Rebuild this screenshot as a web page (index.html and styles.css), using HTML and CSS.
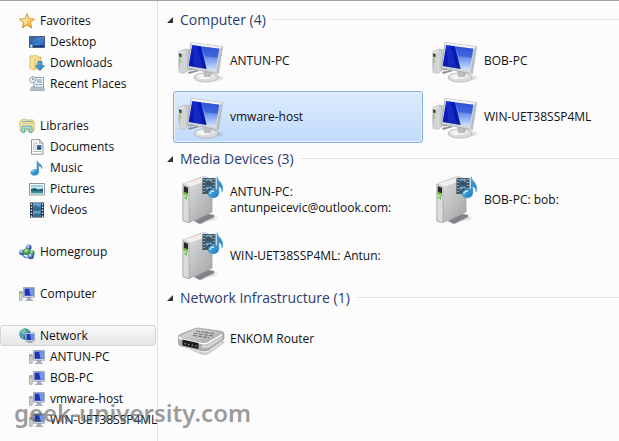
FILE: index.html
```html
<!DOCTYPE html>
<html lang="en">
<head>
<meta charset="utf-8">
<title>Network</title>
<link rel="stylesheet" href="styles.css">
</head>
<body>
<svg class="defs" width="0" height="0" aria-hidden="true">
  <defs>
    <linearGradient id="screen" x1="0" y1="0" x2="0" y2="1"><stop offset="0" stop-color="#3558d8"/><stop offset=".5" stop-color="#6c90ec"/><stop offset="1" stop-color="#d3e6fd"/></linearGradient>
    <linearGradient id="screenDark" x1="0" y1="0" x2="1" y2="1"><stop offset="0" stop-color="#0a1cc8"/><stop offset="1" stop-color="#0516a0"/></linearGradient>
    <linearGradient id="metal" x1="0" y1="0" x2="1" y2="1"><stop offset="0" stop-color="#e4e4e4"/><stop offset=".5" stop-color="#c2c3c4"/><stop offset="1" stop-color="#a2a3a5"/></linearGradient>
    <linearGradient id="silver" x1="0" y1="0" x2="1" y2="0"><stop offset="0" stop-color="#f8f8f8"/><stop offset="1" stop-color="#b4b6b9"/></linearGradient>
    <linearGradient id="gold" x1="0" y1="0" x2="0" y2="1"><stop offset="0" stop-color="#fff0a0"/><stop offset="1" stop-color="#f2ac28"/></linearGradient>
    <linearGradient id="folder" x1="0" y1="0" x2="1" y2="1"><stop offset="0" stop-color="#fcf3ba"/><stop offset="1" stop-color="#e3c065"/></linearGradient>
    <linearGradient id="note" x1="0" y1="0" x2="1" y2="1"><stop offset="0" stop-color="#67c5ef"/><stop offset="1" stop-color="#126fb6"/></linearGradient>
    <linearGradient id="desk" x1="0" y1="0" x2="1" y2="1"><stop offset="0" stop-color="#123a80"/><stop offset=".6" stop-color="#3c82d0"/><stop offset="1" stop-color="#1b4c98"/></linearGradient>
    <linearGradient id="photo" x1="0" y1="0" x2="0" y2="1"><stop offset="0" stop-color="#8dc9e8"/><stop offset=".5" stop-color="#e4f3ee"/><stop offset=".6" stop-color="#287482"/><stop offset="1" stop-color="#4d9ca3"/></linearGradient>
    <radialGradient id="blueBall" cx=".35" cy=".3"><stop offset="0" stop-color="#d5e8fb"/><stop offset="1" stop-color="#345fa5"/></radialGradient>
    <radialGradient id="greenBall" cx=".4" cy=".3"><stop offset="0" stop-color="#cdf2a8"/><stop offset="1" stop-color="#32963a"/></radialGradient>
    <radialGradient id="globe" cx=".35" cy=".3"><stop offset="0" stop-color="#a2ddf5"/><stop offset="1" stop-color="#1765ad"/></radialGradient>
    <radialGradient id="shade"><stop offset="0" stop-color="#777" stop-opacity=".5"/><stop offset="1" stop-color="#777" stop-opacity="0"/></radialGradient>
  </defs>

  <symbol id="i-star" viewBox="0 0 16 16"><path d="M8 .7l2.100 5 5.400.4-4.100 3.500 1.300 5.300L8 12l-4.700 2.900 1.300-5.300L.5 6.100l5.400-.4z" fill="url(#gold)" stroke="#d08a2c" stroke-width=".9" stroke-linejoin="round"/><path d="M8 2.500v8L4.600 13l1-4L2.400 6.600 6.500 6z" fill="#fff8c8" opacity=".5"/></symbol>
  <symbol id="i-desktop" viewBox="0 0 16 16"><path d="M.5 2.500h15v11H.5z" fill="url(#desk)" stroke="#435d85"/><path d="M1 11.500h14V13H1z" fill="#17376f"/><path d="M1.400 13.400v-2.800l2.100.6v2.200z" fill="#e8eef6"/><path d="M1 3h14v1L5 8 1 7z" fill="#fff" opacity=".13"/></symbol>
  <symbol id="i-downloads" viewBox="0 0 16 16"><path d="M1 1l7-.5V2h4v12H6l-5-.6z" fill="url(#folder)" stroke="#c7a650" stroke-width=".6"/><path d="M1 1l4.700 1.400v13L1 13.700z" fill="#f5e39b" stroke="#cfb15e" stroke-width=".5"/><path d="M9 6.500h4v4.200h2.500L11 15.600l-4.500-4.900H9z" fill="url(#note)" stroke="#266f9c" stroke-width=".7"/></symbol>
  <symbol id="i-recent" viewBox="0 0 16 16"><path d="M5 1.500h9.500v10H5z" fill="#edf5fa" stroke="#819baf" stroke-width=".9"/><path d="M8 4h5M8 6h5M6.500 8.500h2.500M10 8.500h3" stroke="#6d94ad"/><path d="M2.500 11h12l1 3.500h-14z" fill="#b3bdc5" stroke="#8b979f" stroke-width=".6"/><circle cx="3.700" cy="3.700" r="3.100" fill="#f5f7f8" stroke="#8998a2" stroke-width=".9"/><path d="M3.700 1.600v2.200h1.700" fill="none" stroke="#3d5666" stroke-width=".7"/></symbol>
  <symbol id="i-libraries" viewBox="0 0 16 16"><path d="M1 3l4-2 2 1h7l1 2v9H1z" fill="url(#folder)" stroke="#c8a951" stroke-width=".7"/><path d="M3 3.500h10" stroke="#77b2ce"/><path d="M0.600 5.500h14.800L14.500 13H1.500z" fill="#f6e7a4" stroke="#ceb262" stroke-width=".5"/><path d="M3 14.500V9q0-1 1-1h8q1 0 1 1v5.500h-2.500V11h-5v3.500z" fill="#a8ded8" stroke="#4b9b9f" stroke-width=".8"/></symbol>
  <symbol id="i-doc" viewBox="0 0 16 16"><path d="M2.500.7h8L14 4.200v11H2.500z" fill="#fff" stroke="#858b92" stroke-width=".9"/><path d="M10.500.7v3.500H14z" fill="#d8dee5" stroke="#858b92" stroke-width=".6"/><path d="M4 4h5M4 6h3.500M4 8h3.500M4 10h3.500M4 12.500h8.500" stroke="#9ca6b0" stroke-width=".8"/><path d="M8 6h4.500v4.500H8z" fill="#3c71ac"/><path d="M8 9l2-1 2.500 2.500H8z" fill="#223e68"/></symbol>
  <symbol id="i-music" viewBox="0 0 16 16"><path d="M8 .7c1 3 6 3.600 4.800 8-.4-2.300-1.800-2.900-3.100-3v6.100c0 2.100-1.700 3.500-4.100 3.500-2.300 0-3.800-1.200-3.800-2.900 0-2 2.700-3.700 6.200-2.700z" fill="url(#note)" stroke="#3083b7" stroke-width=".5"/><path d="M3 12c0-1.500 1.500-2 3-2" stroke="#bbeafe" fill="none"/></symbol>
  <symbol id="i-pictures" viewBox="0 0 16 16"><path d="M.5 2.500h15v11.500H.5z" fill="#f6fafb" stroke="#8c989f"/><path d="M2 4h12v8.500H2z" fill="url(#photo)"/><path d="M2 8l4-1 3 1.500 5-1v2H2z" fill="#185967"/></symbol>
  <symbol id="i-film" viewBox="0 0 16 16"><path d="M1 .5h14v15H1z" fill="#223344"/><path d="M4 1h8v6.500H4zM4 8.500h8V15H4z" fill="#5aa3d2"/><path d="M4 5l3-2 2 2 3-1v3.500H4zM4 13l3-2 3 1 2-2v5H4z" fill="#356c95"/><path d="M2.500 1.500v14M13.500 1.500v14" stroke="#e3eef4" stroke-width="1.300" stroke-dasharray="1.500 1.500"/></symbol>
  <symbol id="i-homegroup" viewBox="0 0 16 16"><circle cx="9.600" cy="3.500" r="3" fill="url(#blueBall)"/><circle cx="3" cy="8.300" r="2.900" fill="url(#blueBall)"/><circle cx="12.700" cy="9" r="3" fill="url(#greenBall)"/><circle cx="11.800" cy="12" r="3.200" fill="url(#blueBall)"/><circle cx="7.800" cy="7.800" r="3.300" fill="url(#greenBall)" stroke="#487b75" stroke-width=".5"/><path d="M3.500 11q2 3 5 2.500" stroke="#6c91bf" stroke-width="1.500" fill="none"/></symbol>
  <symbol id="i-pc" viewBox="0 0 16 16"><path d="M.5 5.500h2.700v8.800H.5z" fill="#d1d8c9" stroke="#929a97" stroke-width=".7"/><path d="M1 7h1.500" stroke="#558b4b"/><path d="M8 11h4v2l2 1v1H7v-1l1-1z" fill="#a8adb5"/><path d="M4.400 1.500h11v9.800h-11z" fill="#d6deeb" stroke="#8c98b1" stroke-width=".8"/><path d="M5.500 2.500h9v7.300h-9z" fill="#1c35b6"/><path d="M10 2.500h4.500v7.300h-3z" fill="#7496e4"/><path d="M6 14.500h7" stroke="#a4adb9"/></symbol>
  <symbol id="i-network" viewBox="0 0 16 16"><circle cx="6" cy="6" r="5.700" fill="url(#globe)"/><path d="M2 3l3-2 2 1-2 2-1 2-2 0zM1 7l3 1 1 3-2-1zM8 1l2 1-1 2z" fill="#75c96e"/><path d="M9 13h4l1 2H8z" fill="#a8adb5"/><path d="M6.500 5h9v8h-9z" fill="#d9e1ef" stroke="#8294b3" stroke-width=".7"/><path d="M7.500 6h7v6h-7z" fill="#1937b6"/><path d="M11 6h3.500v6H12z" fill="#6189df"/></symbol>

  <symbol id="i-computer" viewBox="0 0 48 48">
    <ellipse cx="37" cy="41" rx="10" ry="3.500" fill="url(#shade)"/>
    <path d="M10 35l9-2 2 1-10 3z" fill="#8a8d91"/><path d="M11 33l10-2" stroke="#64686d" stroke-width=".8"/>
    <path d="M0 15l7-3 6 1v18l-7 5.500-6-1.500z" fill="url(#silver)" stroke="#a8a9ac" stroke-width=".5"/>
    <path d="M.5 15.500l5.500 1V36L.5 34.700z" fill="#d3d4d5"/><path d="M1 16.500l2.500.4v3.300L1 19.600z" fill="#253324"/><path d="M2 18v8" stroke="#76ad54" stroke-width=".8"/><path d="M1.300 22v9" stroke="#97a38e" stroke-width=".6"/>
    <ellipse cx="28" cy="40.500" rx="12" ry="4.600" fill="#d9dbdd" stroke="#aaadb0" stroke-width=".7"/><path d="M18 39q8-5 19 0-7 4-15 3z" fill="#f4f5f5"/>
    <path d="M25 33l9 1-1 6h-7z" fill="#b9bcc0"/>
    <path d="M13 5.500l31.500 4.200-4.200 27L9.500 31z" fill="#d5d8db" stroke="#a2a5ab" stroke-width=".7"/><path d="M13 5.500l31.500 4.200-2 2.300-28-3.500z" fill="#f0f1f3"/><path d="M44.500 9.700l-4.200 27-1.600-2.200 3.400-22.600z" fill="#babec5"/>
    <path d="M14.300 8.200l27 3.500-3.600 21.800-27-4.400z" fill="url(#screen)"/><path d="M14.300 8.200l8.600 1.100 5.700 22.600-17.900-2.800z" fill="url(#screenDark)"/><path d="M24 9.500l17.300 2.200-1.500 9q-9-1-13-1.500z" fill="#2448cf" opacity=".55"/><path d="M14.300 8.200l4 .6L25 31l-9-1.500z" fill="#2a4be0" opacity=".35"/>
  </symbol>

  <symbol id="i-media" viewBox="0 0 48 48">
    <ellipse cx="27" cy="42" rx="15" ry="4" fill="url(#shade)"/>
    <path d="M16 45l14-7 6 1v2l-14 7z" fill="#7f8286" stroke="#a9abad" stroke-width=".6"/>
    <path d="M5 8L24 1q2-.5 5 .5l4 1.500q1 .5 1 2v31L11 46.500l-6-1.500z" fill="url(#metal)" stroke="#949699" stroke-width=".6"/>
    <path d="M5 8L25 1l8 2.500L11 11z" fill="#efefef"/><path d="M5 8l6 2.700V46.500L5 45z" fill="#dbdcdd" stroke="#8e9092" stroke-width=".5"/>
    <path d="M5.800 10l4.200 1.700v8L5.800 18z" fill="#242d25"/><path d="M6 16l4 1.200v2.200L6 18.200z" fill="#6fce35"/><path d="M7 20v3M8.500 20.500v3" stroke="#70b84a"/>
    <path d="M24.500 2h13v16h-13z" fill="#273440"/><path d="M27.500 2.500h7v7h-7zM27.500 10.500h7v7h-7z" fill="#69a6d0"/><path d="M27.500 6l3-2 4 3v2.500h-7zM27.500 15l4-3 3 1v4.500h-7z" fill="#31566d"/><circle cx="33" cy="5" r="1" fill="#df6e45"/><path d="M26 2.700V18M36 2.700V18" stroke="#d5e5ed" stroke-width="1.300" stroke-dasharray="1.500 1.500"/>
    <path d="M39 .8c1 5 7.500 6.300 5.200 15-.4-4-2.300-5.300-3.400-5.600v6.600c0 3.200-2.500 5-5.700 5-3 0-4.800-1.700-4.800-4 0-3.300 3.800-5.400 8.700-4.100z" fill="url(#note)" stroke="#3a92c3" stroke-width=".6"/><path d="M32 18c0-2 2-3 4-3" stroke="#c2ecfe" stroke-width="1.300" fill="none"/>
  </symbol>

  <symbol id="i-router" viewBox="0 0 48 48">
    <path d="M8 33l19 4.500q5 0 18-12l2 2-17 12q-3 1-7 0z" fill="#777" opacity=".35"/>
    <path d="M0 22q0-1.500 2-2.500L17 13.500q2-.7 4-.3l21 2.800q4 .7 4 3v4q0 1.500-2 2.700L31 35q-3 1.500-7 .7L3 31q-2.500-.5-2.500-2.500z" fill="#aeb0b2" stroke="#919396" stroke-width=".6"/>
    <path d="M1 21.500l17-7.500q2-.5 4 0l20 3q4 1 1.500 2.700L29 28.200q-2 .8-5 .4L3 24.200q-2.500-.7-2-2.700z" fill="url(#metal)"/>
    <path d="M1 21.800q.2 1.700 3 2.400l20 4.400q3 .5 6-.7l14-8" fill="none" stroke="#fff" stroke-width="1.300"/>
    <path d="M18 16l12 1.700M27 17.300l9 1.200M15.500 18l10 1.500M26 19.500l9 1.400M15 20.300l16 2.500" stroke="#77797c" stroke-width="1.200" stroke-dasharray="4 1"/>
    <path d="M4.500 24.500l16 3.600v6L5.500 30.800q-1.200-.3-1.200-1.500z" fill="#1c1e21"/><path d="M6.500 28.500l12 2.700" stroke="#9ba3aa" stroke-width="1.300" stroke-dasharray="1.200 2.500"/>
    <path d="M24 30l6-.5 14-8v2.500L31 32.500l-7 .7z" fill="#d2d3d4"/>
  </symbol>
</svg>

<div class="window">
  <nav class="sidebar" aria-label="Places">
    <div class="group">
      <a class="place" href="#"><svg class="small-icon"><use href="#i-star"/></svg>Favorites</a>
      <a class="place child" href="#"><svg class="small-icon"><use href="#i-desktop"/></svg>Desktop</a>
      <a class="place child" href="#"><svg class="small-icon"><use href="#i-downloads"/></svg>Downloads</a>
      <a class="place child" href="#"><svg class="small-icon"><use href="#i-recent"/></svg>Recent Places</a>
    </div>
    <div class="group">
      <a class="place" href="#"><svg class="small-icon"><use href="#i-libraries"/></svg>Libraries</a>
      <a class="place child" href="#"><svg class="small-icon"><use href="#i-doc"/></svg>Documents</a>
      <a class="place child" href="#"><svg class="small-icon"><use href="#i-music"/></svg>Music</a>
      <a class="place child" href="#"><svg class="small-icon"><use href="#i-pictures"/></svg>Pictures</a>
      <a class="place child" href="#"><svg class="small-icon"><use href="#i-film"/></svg>Videos</a>
    </div>
    <div class="group">
      <a class="place" href="#"><svg class="small-icon"><use href="#i-homegroup"/></svg>Homegroup</a>
    </div>
    <div class="group">
      <a class="place" href="#"><svg class="small-icon"><use href="#i-pc"/></svg>Computer</a>
    </div>
    <div class="group">
      <a class="place current" href="#" aria-current="page"><svg class="small-icon"><use href="#i-network"/></svg>Network</a>
      <a class="place child" href="#"><svg class="small-icon"><use href="#i-pc"/></svg>ANTUN-PC</a>
      <a class="place child" href="#"><svg class="small-icon"><use href="#i-pc"/></svg>BOB-PC</a>
      <a class="place child" href="#"><svg class="small-icon"><use href="#i-pc"/></svg>vmware-host</a>
      <a class="place child" href="#"><svg class="small-icon"><use href="#i-pc"/></svg>WIN-UET38SSP4ML</a>
    </div>
  </nav>

  <main class="content">
    <section>
      <h2 class="heading"><svg class="arrow" viewBox="0 0 6 6"><path d="M6 0v6H0z"/></svg>Computer (4)</h2>
      <div class="tiles">
        <a class="tile" href="#"><svg class="large-icon"><use href="#i-computer"/></svg><span>ANTUN-PC</span></a>
        <a class="tile" href="#"><svg class="large-icon"><use href="#i-computer"/></svg><span>BOB-PC</span></a>
        <a class="tile selected" href="#"><svg class="large-icon"><use href="#i-computer"/></svg><span>vmware-host</span></a>
        <a class="tile" href="#"><svg class="large-icon"><use href="#i-computer"/></svg><span>WIN-UET38SSP4ML</span></a>
      </div>
    </section>
    <section>
      <h2 class="heading"><svg class="arrow" viewBox="0 0 6 6"><path d="M6 0v6H0z"/></svg>Media Devices (3)</h2>
      <div class="tiles">
        <a class="tile" href="#"><svg class="large-icon"><use href="#i-media"/></svg><span>ANTUN-PC:<br>antunpeicevic@outlook.com:</span></a>
        <a class="tile" href="#"><svg class="large-icon"><use href="#i-media"/></svg><span>BOB-PC: bob:</span></a>
        <a class="tile" href="#"><svg class="large-icon"><use href="#i-media"/></svg><span>WIN-UET38SSP4ML: Antun:</span></a>
      </div>
    </section>
    <section>
      <h2 class="heading"><svg class="arrow" viewBox="0 0 6 6"><path d="M6 0v6H0z"/></svg>Network Infrastructure (1)</h2>
      <div class="tiles">
        <a class="tile" href="#"><svg class="large-icon"><use href="#i-router"/></svg><span>ENKOM Router</span></a>
      </div>
    </section>
  </main>
  <div class="watermark">geek-university.com</div>
</div>
</body>
</html>
```
FILE: styles.css
```css
* {
  box-sizing: border-box;
}

body {
  margin: 0;
  background: #fcfcfc;
  color: #111;
  font: 12px/16px "Open Sans", "Noto Sans", sans-serif;
}

a {
  color: inherit;
  text-decoration: none;
}

.defs {
  position: absolute;
}

.window {
  position: relative;
  display: flex;
  min-height: 100vh;
  border-top: 1px solid #9ba3aa;
  overflow: hidden;
}

.sidebar {
  flex: 0 0 158px;
  min-width: 0;
  display: flex;
  flex-direction: column;
  gap: 21px;
  padding-top: 9px;
  border-right: 1px solid #d6e5f5;
}

.place {
  display: flex;
  align-items: center;
  gap: 5px;
  height: 21px;
  margin-right: 1px;
  padding-left: 18px;
  border: 1px solid transparent;
  border-radius: 3px;
  white-space: nowrap;
}

.child {
  padding-left: 28px;
}

.current {
  border-color: #d4d4d4;
  background: linear-gradient(#f9f9f9, #e6e6e6);
}

.small-icon {
  flex: none;
  width: 16px;
  height: 16px;
}

.content {
  flex: 1;
  min-width: 0;
  padding: 3px 0 0 9px;
}

.heading {
  display: flex;
  align-items: center;
  gap: 7px;
  height: 31px;
  margin: 0;
  color: #2b3d70;
  font-size: 14px;
  font-weight: 400;
  white-space: nowrap;
}

.heading::after {
  content: "";
  flex: 1;
  height: 1px;
  background: #dfe1e5;
}

.arrow {
  width: 6px;
  height: 6px;
  fill: #333;
}

.tiles {
  display: grid;
  grid-template-columns: repeat(2, 250px);
  gap: 4px;
  padding-left: 6px;
}

.tile {
  display: flex;
  align-items: center;
  gap: 4px;
  height: 52px;
  padding-left: 4px;
  border: 1px solid transparent;
  border-radius: 3px;
}

.selected {
  border-color: #84acdd;
  background: linear-gradient(#dcebfc, #c1dbfc);
  box-shadow: inset 0 0 0 1px #e8f2fd;
}

.large-icon {
  flex: none;
  width: 48px;
  height: 48px;
}

.watermark {
  position: absolute;
  bottom: 12px;
  left: 14px;
  color: rgba(90, 90, 90, 0.6);
  font-family: "Noto Sans", sans-serif;
  font-size: 24px;
  font-weight: 600;
  line-height: 32px;
  pointer-events: none;
}
```
